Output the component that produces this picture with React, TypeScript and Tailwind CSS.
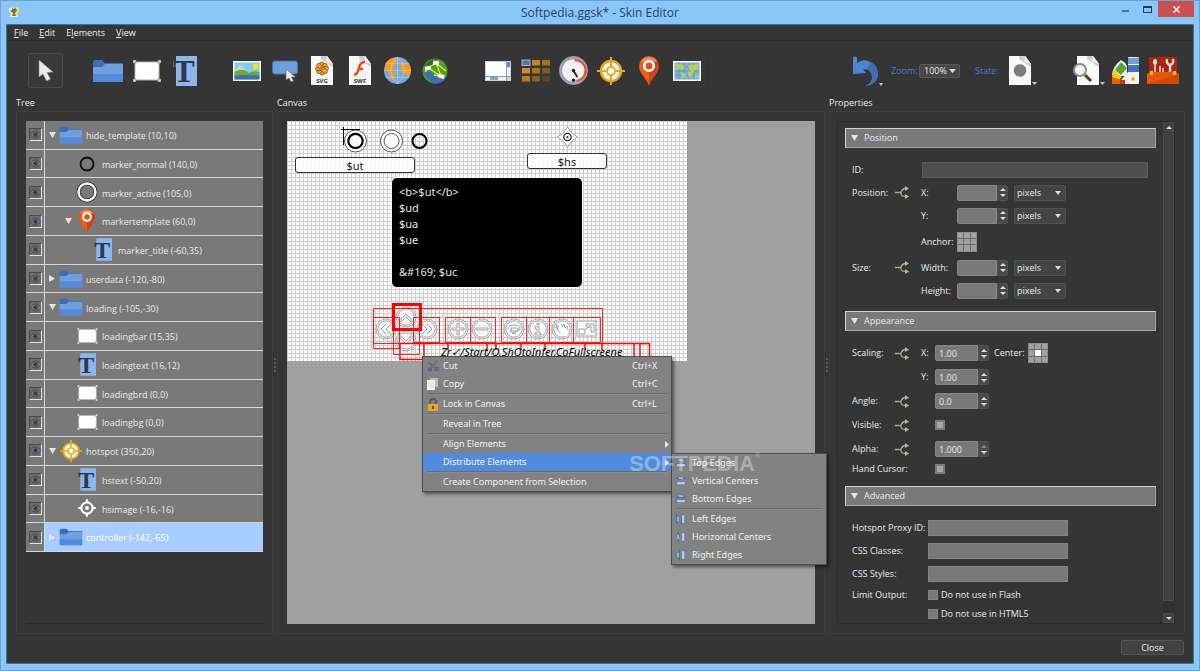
import { useState, type ReactNode } from 'react';

type IconName =
  | 'folder'
  | 'rect'
  | 'text'
  | 'pin'
  | 'hotspot'
  | 'ring'
  | 'ringActive'
  | 'crosshair';

type TreeNode = {
  label: string;
  icon: IconName;
  level: 0 | 1 | 2;
  arrow?: 'open' | 'closed';
};

const treeNodes: TreeNode[] = [
  { label: 'hide_template (10,10)', icon: 'folder', level: 0, arrow: 'open' },
  { label: 'marker_normal (140,0)', icon: 'ring', level: 1 },
  { label: 'marker_active (105,0)', icon: 'ringActive', level: 1 },
  { label: 'markertemplate (60,0)', icon: 'pin', level: 1, arrow: 'open' },
  { label: 'marker_title (-60,35)', icon: 'text', level: 2 },
  { label: 'userdata (-120,-80)', icon: 'folder', level: 0, arrow: 'closed' },
  { label: 'loading (-105,-30)', icon: 'folder', level: 0, arrow: 'open' },
  { label: 'loadingbar (15,35)', icon: 'rect', level: 1 },
  { label: 'loadingtext (16,12)', icon: 'text', level: 1 },
  { label: 'loadingbrd (0,0)', icon: 'rect', level: 1 },
  { label: 'loadingbg (0,0)', icon: 'rect', level: 1 },
  { label: 'hotspot (350,20)', icon: 'hotspot', level: 0, arrow: 'open' },
  { label: 'hstext (-50,20)', icon: 'text', level: 1 },
  { label: 'hsimage (-16,-16)', icon: 'crosshair', level: 1 },
  { label: 'controller (-142,-65)', icon: 'folder', level: 0, arrow: 'closed' },
];

const levelPadding = ['pl-0', 'pl-4', 'pl-8'];

/* ---------- icons ---------- */

function FolderIcon({ className }: { className: string }) {
  return (
    <svg viewBox="0 0 32 24" className={className} preserveAspectRatio="none">
      <path d="M1 3q0-2 2-2h7l3 3h17q1 0 1 1v5H1z" fill="#3f6cb4" />
      <path d="M1 8h9l3-3h18v17q0 1-1 1H2q-1 0-1-1z" fill="#6f9fdf" />
      <path d="M1 15h30v7q0 1-1 1H2q-1 0-1-1z" fill="#528bdb" />
    </svg>
  );
}

function RectIcon({ className }: { className: string }) {
  return (
    <svg viewBox="0 0 28 22" className={className}>
      <rect x="2" y="2" width="24" height="18" fill="#fff" stroke="#b5b5b5" />
      {[
        [0, 0],
        [25, 0],
        [0, 19],
        [25, 19],
      ].map(([x, y]) => (
        <rect key={`${x}-${y}`} x={x} y={y} width="3" height="3" fill="#d8d8d8" stroke="#777" strokeWidth=".5" />
      ))}
    </svg>
  );
}

function TextIcon({ className }: { className: string }) {
  return (
    <svg viewBox="0 0 24 30" className={className}>
      <rect x="3" width="21" height="30" fill="#8fb5ea" />
      <rect y="5" width="3" height="6" fill="#6c6c6c" />
      <text
        x="11"
        y="26"
        textAnchor="middle"
        fontFamily="Liberation Serif, serif"
        fontWeight="bold"
        fontSize="32"
        fill="#2c3a50"
      >
        T
      </text>
    </svg>
  );
}

function PinIcon({ className }: { className: string }) {
  return (
    <svg viewBox="0 0 20 30" className={className}>
      <path d="M10 0a10 10 0 0 0-10 10c0 7 6 10 10 20z" fill="#ee5d12" />
      <path d="M10 0a10 10 0 0 1 10 10c0 7-6 10-10 20z" fill="#c8461a" />
      <path d="M2 5a10 10 0 0 1 16 0q-8 3-16 0z" fill="#f58a62" />
      <circle cx="10" cy="10" r="4.8" fill="#e8501a" stroke="#fff" strokeWidth="2.6" />
    </svg>
  );
}

function HotspotIcon({ className }: { className: string }) {
  return (
    <svg viewBox="0 0 28 28" className={className}>
      <circle cx="14" cy="14" r="10" fill="#fbf6e6" stroke="#e3a722" strokeWidth="2.4" />
      <path d="M14 0v9M14 19v9M0 14h9M19 14h9" stroke="#e3a722" strokeWidth="2" />
      <circle cx="14" cy="14" r="4" fill="#fff" stroke="#e3a722" strokeWidth="1.8" />
    </svg>
  );
}

function CrosshairIcon({ className }: { className: string }) {
  return (
    <svg viewBox="0 0 20 20" className={className}>
      <circle cx="10" cy="10" r="6.2" fill="none" stroke="#fff" strokeWidth="2.2" />
      <circle cx="10" cy="10" r="2.2" fill="#fff" />
      <path d="M8.500 4L10 0l1.500 4zM8.500 16l1.500 4 1.500-4zM4 8.500L0 10l4 1.500zM16 8.500l4 1.500-4 1.500z" fill="#fff" stroke="#fff" />
    </svg>
  );
}

function TreeIcon({ name }: { name: IconName }) {
  switch (name) {
    case 'folder':
      return <FolderIcon className="w-6 h-[18px]" />;
    case 'rect':
      return <RectIcon className="w-[21px] h-4" />;
    case 'text':
      return <TextIcon className="w-[18px] h-[23px]" />;
    case 'pin':
      return <PinIcon className="w-4 h-6" />;
    case 'hotspot':
      return <HotspotIcon className="w-[22px] h-[22px]" />;
    case 'crosshair':
      return <CrosshairIcon className="w-[18px] h-[18px]" />;
    case 'ring':
      return (
        <svg viewBox="0 0 16 16" className="w-4 h-4">
          <circle cx="8" cy="8" r="6.500" fill="none" stroke="#0b0b0b" strokeWidth="1.800" />
        </svg>
      );
    case 'ringActive':
      return (
        <svg viewBox="0 0 22 22" className="w-[22px] h-[22px]">
          <circle cx="11" cy="11" r="8.500" fill="none" stroke="#333" strokeWidth="4" />
          <circle cx="11" cy="11" r="8.500" fill="none" stroke="#fff" strokeWidth="2.400" />
        </svg>
      );
  }
}

function Cursor({ className }: { className: string }) {
  return (
    <svg viewBox="0 0 16 22" className={className}>
      <path d="M1 0v17l4-3 3.500 7 4-2-3.500-6.500 6-.5z" fill="#e9e9e9" stroke="#8a8a8a" strokeWidth=".6" />
    </svg>
  );
}

function ImageIcon() {
  return (
    <svg viewBox="0 0 28 20" className="w-7 h-5">
      <rect width="28" height="20" fill="#fff" />
      <rect x="1.500" y="1.500" width="25" height="17" fill="#7fcdf0" />
      <path d="M2 10l4-6q4 0 7 6z" fill="#cfd3cf" />
      <path d="M1.500 11q9-5 14 1 6-3 11-1v5h-25z" fill="#6eaa35" />
      <path d="M1.500 15q12-2 25 0v3.500h-25z" fill="#3f6ea9" />
      <circle cx="22.500" cy="5.500" r="2.800" fill="#ffe600" />
    </svg>
  );
}

function ButtonIcon() {
  return (
    <svg viewBox="0 0 26 22" className="w-[26px] h-[22px]">
      <rect x=".5" y="1" width="25" height="13" rx="2.500" fill="#6f9fdf" stroke="#4573b5" />
      <path d="M14 9v11l3-2 2 4 2.500-1-2-4h4z" fill="#eee" stroke="#666" strokeWidth=".7" />
    </svg>
  );
}

function PageShape() {
  return (
    <>
      <path d="M1 0h16l6 8v21H1z" fill="#f8f8f8" />
      <path d="M17 0l6 8v3L11 3V0z" fill="#cfcfcf" />
      <path d="M17 0l6 8-7-2z" fill="#eee" />
    </>
  );
}

function FileIcon({ kind }: { kind: 'SVG' | 'SWF' }) {
  return (
    <svg viewBox="0 0 24 29" className="w-6 h-[29px]">
      <PageShape />
      {kind === 'SVG' ? (
        <g stroke="#6b4a12" strokeWidth=".7" fill="#f0a52a">
          {[0, 45, 90, 135].map((angle) => (
            <rect key={angle} x="10" y="6" width="4" height="13" rx="2" transform={`rotate(${angle} 12 12.500)`} />
          ))}
          <circle cx="12" cy="12.500" r="2.200" fill="#c97b14" stroke="none" />
        </g>
      ) : (
        <path d="M17 6q-5 0-6 6-1 6-5 7M9.500 13h5.500" fill="none" stroke="#ea4d0e" strokeWidth="2.400" />
      )}
      <text
        x="12"
        y="27"
        textAnchor="middle"
        fontFamily="Open Sans, sans-serif"
        fontWeight="bold"
        fontSize="6"
        fill="#333"
      >
        {kind}
      </text>
    </svg>
  );
}

function GlobeIcon() {
  return (
    <svg viewBox="0 0 30 30" className="w-[29px] h-[29px]">
      <circle cx="15" cy="15" r="14" fill="#7ba8dc" />
      <path d="M3 7q5-6 10-5l2 4-4 3 2 3-4 2 1 3-3 1-4-3-1-3zM8 15l5 2-1 5-2 4-3-7zM19 6l6 1q4 4 4 9l-3 6-3-4-4-2-1-4z" fill="#f39c24" />
      <path d="M15 1v28M1 15h28M3 8h24M3 22h24M15 1q-14 14 0 28M15 1q14 14 0 28" fill="none" stroke="#d2e1f2" strokeOpacity=".7" strokeWidth=".6" />
    </svg>
  );
}

function NodeGlobeIcon() {
  return (
    <svg viewBox="0 0 26 26" className="w-[26px] h-[26px]">
      <circle cx="13" cy="13" r="12.500" fill="#4ea02c" />
      <path d="M1 9q7-9 14-8l-5 8z" fill="#2f6e24" />
      <path d="M.5 13q7-1 12 4t12 2q-4 7-11 6.500T.5 13z" fill="#3c6fb4" />
      <path d="M6 10l8-5M6 10l13 8M14 5l5 13M14 5l10 8M3 14l3-4M12 17l7 1" stroke="#e8e62a" strokeWidth="1.300" />
      <rect x="3" y="8" width="6" height="4" fill="#fff" transform="rotate(-12 6 10)" />
      <rect x="11" y="3" width="6" height="4" fill="#fff" transform="rotate(8 14 5)" />
      <rect x="16.500" y="16" width="6" height="4" fill="#fff" transform="rotate(18 19 18)" />
    </svg>
  );
}

function ScrollAreaIcon() {
  return (
    <svg viewBox="0 0 26 20" className="w-[26px] h-5">
      <rect width="26" height="20" fill="#c9d3df" />
      <rect x="1" y="1" width="20" height="14" fill="#fff" />
      <rect x="22" y="1" width="3" height="5" fill="#5d8dcc" />
      <rect x="22" y="7" width="3" height="8" fill="#f0f4f8" />
      <rect x="1" y="16" width="20" height="3" fill="#f0f4f8" />
      <rect x="5" y="16" width="8" height="3" fill="#7ba3dc" />
      <path d="M21.500 0v20M0 15.500h26" stroke="#888" strokeWidth=".8" />
    </svg>
  );
}

function ClonerIcon() {
  const fills = ['#4a76b8', '#c58420', '#a87122', '#d08c1f', '#a87122', '#7d5a26', '#b87c22', '#8a6225', '#5b4628'];
  return (
    <svg viewBox="0 0 29 23" className="w-[29px] h-[23px]">
      {fills.map((fill, i) => (
        <rect
          key={i}
          x={1 + (i % 3) * 10}
          y={1 + Math.floor(i / 3) * 8}
          width="8"
          height="5.500"
          fill={fill}
          stroke={i === 0 ? '#c9c9c9' : 'none'}
          strokeWidth=".8"
        />
      ))}
    </svg>
  );
}

function GaugeIcon() {
  return (
    <svg viewBox="0 0 30 30" className="w-[29px] h-[29px]">
      <circle cx="15" cy="15" r="13" fill="#f3f1ef" stroke="#9a9ab2" strokeWidth="2.600" />
      <circle cx="15" cy="15" r="14.500" fill="none" stroke="#c6c6d6" strokeWidth=".8" />
      <path d="M16 4.500a10.500 10.500 0 0 1 2 21" fill="none" stroke="#e0541c" strokeWidth="2" />
      <path d="M15 15l4 7" stroke="#222" strokeWidth="1.800" />
      <circle cx="15" cy="15" r="1.800" fill="#222" />
      <circle cx="15" cy="25" r="1.800" fill="#222" />
    </svg>
  );
}

function MapIcon() {
  return (
    <svg viewBox="0 0 28 20" className="w-7 h-5">
      <rect width="28" height="20" fill="#fff" />
      <rect x="1.500" y="1.500" width="25" height="17" fill="#79aee4" />
      <path d="M6 1.500v17M11 1.500v17M16 1.500v17M21 1.500v17M1.500 6h25M1.500 10h25M1.500 14h25" stroke="#4c78aa" strokeWidth=".4" />
      <path d="M2 3h7l3 3-3 3-3-1-3 2zM8 11l5 2-1 4-3 1zM15 4l10-1 1 5-4 1-2 3-4-3zM15 10l5 2-2 5-3-2zM22 13l4 1v3h-4z" fill="#b3cf5a" />
    </svg>
  );
}

function UndoIcon() {
  return (
    <svg viewBox="0 0 26 30" className="w-[26px] h-[30px]">
      <path d="M0 1q2-1 4 0v6q6-5 13-1 8 5 8 13-1 9-12 11 7-4 6-10-1-7-9-7l3 4L1 18q-1 0-1-1z" fill="#4b86d4" />
      <path d="M18 6q8 5 7 14-2 8-12 10 7-4 6-10-1-6-6-7z" fill="#3f70b4" />
    </svg>
  );
}

function StateIcon() {
  return (
    <svg viewBox="0 0 24 29" className="w-6 h-[29px]">
      <PageShape />
      <circle cx="12" cy="14.500" r="6.300" fill="#7c7c7c" />
    </svg>
  );
}

function PreviewIcon() {
  return (
    <svg viewBox="0 0 28 29" className="w-7 h-[29px]">
      <g transform="translate(4)">
        <PageShape />
      </g>
      <path d="M13 19l6 6" stroke="#5c3d16" strokeWidth="3" />
      <circle cx="8" cy="14" r="6" fill="#f4f4f4" stroke="#8c8c86" strokeWidth="2" />
    </svg>
  );
}

function SwatchesIcon() {
  return (
    <svg viewBox="0 0 28 28" className="w-7 h-7">
      <rect x="17" y="0" width="11" height="27" rx="1" fill="#f4f4f4" />
      <rect x="17" y="1" width="11" height="6" fill="#6f9fdf" />
      <rect x="17" y="8" width="11" height="7" fill="#4272c0" />
      <path d="M10 3q4 2 6 6v10H6L1 18q1-9 9-15z" fill="#eef2e4" />
      <path d="M10 5l6 6-6 7-6-5z" fill="#5aa62d" />
      <path d="M3 13l8 7-4 4-6-4z" fill="#f2d100" />
      <path d="M1 20l9 3v4H1z" fill="#ee5c0c" />
      <path d="M10 23l7-8v12h-7z" fill="#f1e9e4" />
      <path d="M9 23h5v4H9z" fill="#c83a0c" />
      <circle cx="22" cy="22" r="1.800" fill="#e9a620" />
    </svg>
  );
}

function ToolboxIcon() {
  return (
    <svg viewBox="0 0 32 27" className="w-8 h-[27px]">
      <rect x="2" y="0" width="28" height="18" fill="#ad2508" />
      <path d="M8 7v9M13 9v7M16 11v5" stroke="#ddd" strokeWidth="1.600" />
      <ellipse cx="8" cy="5" rx="2" ry="3" fill="#ddd" />
      <path d="M20 2q-1 5 3 6 4-1 3-6M23 8v9" fill="none" stroke="#d8d8d8" strokeWidth="2.400" />
      <path d="M0 17l3-2h26l3 2v10H0z" fill="#ea5407" />
      <path d="M0 27L32 17v10z" fill="#d04a0a" />
      <path d="M3 14h3v4H3zM26 14h3v4h-3z" fill="#f2b51d" />
    </svg>
  );
}

function LinkIcon() {
  return (
    <svg viewBox="0 0 14 13" className="w-[14px] h-[13px]">
      <path d="M0 6.500h6M11 2.500Q7 2.500 6 6.500T11 10.500" fill="none" stroke="#a9a99f" strokeWidth="1.300" />
      <path d="M10 0l4 2.500L10 5zM10 8l4 2.500L10 13z" fill="#b5b5ab" />
    </svg>
  );
}

function Triangle({ direction, className }: { direction: 'down' | 'right' | 'up'; className: string }) {
  const paths = {
    down: 'M0 0h8L4 8z',
    right: 'M0 0l8 4-8 4z',
    up: 'M0 8h8L4 0z',
  };
  return (
    <svg viewBox="0 0 8 8" className={className} fill="currentColor" preserveAspectRatio="none">
      <path d={paths[direction]} />
    </svg>
  );
}

function EyeIcon() {
  return (
    <svg viewBox="0 0 12 10" className="w-[11px] h-[9px]">
      <path d="M0 5q6-8 12 0-6 8-12 0z" fill="#77777c" stroke="#46464b" strokeWidth="1" />
      <circle cx="6" cy="5" r="2.500" fill="#3e3e44" />
    </svg>
  );
}

/* ---------- window chrome ---------- */

function TitleBar() {
  return (
    <header className="h-[23px] shrink-0 grid grid-cols-[1fr_auto_1fr]">
      <div className="pt-[5px] pl-[2px]">
        <svg viewBox="0 0 13 12" className="w-[13px] h-3">
          <path d="M1 2l4-1 2 1 3-1 1 4-2 2 1 4H2l1-4-2-1z" fill="#f3ead6" />
          <path d="M4 1l1 2 3-1 1 3-2 2 1 3H4l1-3-3-2 2-1z" fill="#8a6a35" />
          <path d="M9 3l3-2-2 6-2 3z" fill="#f3dd3a" />
        </svg>
      </div>
      <h1 className="text-[12px] leading-6 text-[#26445e]">Softpedia.ggsk* - Skin Editor</h1>
      <div className="flex justify-end items-start">
        <button aria-label="Minimize" className="w-[22px] h-4 flex justify-center items-center pt-1">
          <span className="w-[7px] h-[2px] bg-[#5b7389]" />
        </button>
        <button aria-label="Maximize" className="w-[22px] h-4 flex justify-center items-center">
          <span className="w-[9px] h-[7px] border border-t-2 border-[#24394c]" />
        </button>
        <button aria-label="Close window" className="w-9 h-4 bg-[#c75050] flex justify-center items-center">
          <svg viewBox="0 0 7 7" className="w-[7px] h-[7px]">
            <path d="M.5.5l6 6M6.500.5l-6 6" stroke="#fff" strokeWidth="1.500" />
          </svg>
        </button>
      </div>
    </header>
  );
}

function MenuBar() {
  return (
    <nav className="h-4 shrink-0 flex gap-[11px] pl-[7px] text-[9px] leading-4 text-[#f0f0f0] border-b border-[#2c2c2c]">
      <button><u>F</u>ile</button>
      <button><u>E</u>dit</button>
      <button>E<u>l</u>ements</button>
      <button><u>V</u>iew</button>
    </nav>
  );
}

function Tool({ label, children }: { label: string; children: ReactNode }) {
  return (
    <button aria-label={label} className="w-[34px] h-[34px] flex items-center justify-center">
      {children}
    </button>
  );
}

function Toolbar() {
  return (
    <div className="h-[54px] shrink-0 flex items-center pt-[5px] pl-[21px] pr-[14px]">
      <button
        aria-label="Select"
        className="w-[35px] h-[35px] flex items-center justify-center rounded-[2px] bg-[#393939] border border-[#4a4a4a]"
      >
        <Cursor className="w-4 h-[22px]" />
      </button>
      <div className="flex justify-between w-[111px] ml-7">
        <Tool label="Container"><FolderIcon className="w-8 h-6" /></Tool>
        <Tool label="Rectangle"><RectIcon className="w-7 h-[22px]" /></Tool>
        <Tool label="Text"><TextIcon className="w-6 h-[30px]" /></Tool>
      </div>
      <div className="flex justify-between w-[222px] ml-7">
        <Tool label="Image"><ImageIcon /></Tool>
        <Tool label="Button"><ButtonIcon /></Tool>
        <Tool label="SVG"><FileIcon kind="SVG" /></Tool>
        <Tool label="SWF"><FileIcon kind="SWF" /></Tool>
        <Tool label="External"><GlobeIcon /></Tool>
        <Tool label="Node marker"><NodeGlobeIcon /></Tool>
      </div>
      <div className="flex justify-between w-[223px] ml-[29px]">
        <Tool label="Scroll area"><ScrollAreaIcon /></Tool>
        <Tool label="Cloner"><ClonerIcon /></Tool>
        <Tool label="Timer"><GaugeIcon /></Tool>
        <Tool label="Hotspot template"><HotspotIcon className="w-7 h-7" /></Tool>
        <Tool label="Marker"><PinIcon className="w-5 h-[30px]" /></Tool>
        <Tool label="Map"><MapIcon /></Tool>
      </div>
      <div className="w-px h-7 ml-1 bg-[#2e2e2e]" />
      <div className="ml-auto flex items-center text-[9px] text-[#4a80c8]">
        <button aria-label="Undo" className="flex items-end">
          <UndoIcon />
          <Triangle direction="down" className="w-1 h-[3px] text-[#ccc]" />
        </button>
        <label htmlFor="zoom" className="ml-2 w-7">Zoom:</label>
        <div className="relative">
          <select
            id="zoom"
            className="appearance-none block w-[41px] h-[14px] pl-1 text-[9px] leading-3 text-[#e8e8e8] bg-[#474747] border border-[#5a5a5a] rounded-[2px]"
          >
            <option>100%</option>
          </select>
          <Triangle direction="down" className="absolute right-1 top-[5px] w-[7px] h-1 text-[#ddd] pointer-events-none" />
        </div>
        <span className="ml-[15px] w-[33px]">State:</span>
        <button aria-label="State" className="flex items-end">
          <StateIcon />
          <Triangle direction="down" className="w-[5px] h-[3px] text-[#ccc]" />
        </button>
        <button aria-label="Preview" className="flex items-end ml-[35px]">
          <PreviewIcon />
          <Triangle direction="down" className="w-[5px] h-[3px] text-[#ccc]" />
        </button>
        <button aria-label="Colors" className="ml-[6px]"><SwatchesIcon /></button>
        <button aria-label="Toolbox" className="ml-2"><ToolboxIcon /></button>
      </div>
    </div>
  );
}

/* ---------- tree ---------- */

function TreeRow({ node, selected, onSelect }: { node: TreeNode; selected: boolean; onSelect: () => void }) {
  return (
    <li className="flex flex-1 min-h-0 bg-[#797979] border-b border-[#d8d8d8]">
      <div className="w-[19px] flex items-center justify-center border-r border-[#d8d8d8]">
        <button
          aria-label={`Toggle ${node.label}`}
          className="w-[13px] h-[13px] flex items-center justify-center bg-[#6c6c6c] border border-t-[#4b4b4b] border-l-[#4b4b4b] border-b-[#e0e0e0] border-r-[#e0e0e0]"
        >
          <EyeIcon />
        </button>
      </div>
      <div
        onClick={onSelect}
        className={`flex flex-1 items-center ${levelPadding[node.level]} ${
          selected ? 'bg-[#aacdff] text-white' : ''
        }`}
      >
        <span className="w-[14px] pl-1 text-[#e6e6de]">
          {node.arrow === 'open' && <Triangle direction="down" className="w-[7px] h-[6px]" />}
          {node.arrow === 'closed' && <Triangle direction="right" className="w-[6px] h-[7px]" />}
        </span>
        <span className="w-6 flex justify-center">
          <TreeIcon name={node.icon} />
        </span>
        <span className="pl-[3px] pt-[2px]">{node.label}</span>
      </div>
    </li>
  );
}

function TreePanel() {
  const [selected, setSelected] = useState(14);
  return (
    <section className="w-[257px] shrink-0 flex flex-col">
      <h2 className="leading-4">Tree</h2>
      <div className="flex-1 border border-[#3f3f3f] rounded-[2px] p-[9px]">
        <div className="h-full border-b border-[#2b2b2b]">
          <ul className="h-[431px] flex flex-col">
            {treeNodes.map((node, i) => (
              <TreeRow key={node.label} node={node} selected={i === selected} onSelect={() => setSelected(i)} />
            ))}
          </ul>
        </div>
      </div>
    </section>
  );
}

/* ---------- canvas ---------- */

function Distribute({ vertical, offset }: { vertical?: boolean; offset: number }) {
  return (
    <svg viewBox="0 0 12 12" className="w-[10px] h-[10px]">
      <g transform={vertical ? 'rotate(-90 6 6)' : undefined}>
        <path d={`M0 ${2 + offset}h12M0 ${8 + offset}h12`} stroke="#2f5f9f" strokeWidth="1" />
        <rect x="3" y="1" width="6" height="3" fill="#8fb5dd" stroke="#3c6aa8" strokeWidth=".5" />
        <rect x="1" y="7" width="10" height="3.500" fill="#b5cde6" stroke="#3c6aa8" strokeWidth=".5" />
      </g>
    </svg>
  );
}

function CutIcon() {
  return (
    <svg viewBox="0 0 12 12" className="w-3 h-3" fill="none">
      <path d="M1 2l7 6M10 1L4 8" stroke="#6a6a7a" strokeWidth="1.500" />
      <circle cx="3" cy="9.500" r="1.500" stroke="#55557c" strokeWidth="1.200" />
      <circle cx="9.500" cy="9" r="1.500" stroke="#55557c" strokeWidth="1.200" />
    </svg>
  );
}

function CopyIcon() {
  return (
    <svg viewBox="0 0 12 12" className="w-3 h-3">
      <path d="M3 0h8v9H3z" fill="#bdbdb8" />
      <path d="M0 2h8v10H0z" fill="#f1f1ee" />
      <path d="M2 5h5M2 7h5M2 9h5" stroke="#dcdcd8" />
    </svg>
  );
}

function LockIcon() {
  return (
    <svg viewBox="0 0 12 13" className="w-3 h-[13px]">
      <path d="M3 7V4q0-3 3-3t3 3v3" fill="none" stroke="#53565c" strokeWidth="1.800" />
      <rect x="1" y="6" width="10" height="7" fill="#e4a91f" />
      <rect x="5" y="8" width="2" height="3" fill="#6e4c08" />
    </svg>
  );
}

type MenuItemProps = {
  label: string;
  icon?: ReactNode;
  shortcut?: string;
  submenu?: boolean;
  active?: boolean;
};

function MenuItem({ label, icon, shortcut, submenu, active }: MenuItemProps) {
  return (
    <button
      role="menuitem"
      className={`w-full h-[18px] flex items-center pl-1 pr-[2px] text-left ${active ? 'bg-[#528bdb]' : ''}`}
    >
      <span className="w-4 h-[13px] flex items-center">{icon}</span>
      <span className="flex-1">{label}</span>
      {shortcut && <span className="w-[37px]">{shortcut}</span>}
      {submenu && <Triangle direction="right" className="w-1 h-[7px] text-[#e2e2e2]" />}
    </button>
  );
}

function MenuSeparator() {
  return <div className="h-[2px] mx-1 border-t border-[#6b6b6b] bg-[#8b8b8b]" />;
}

const menuClass = 'absolute bg-[#828282] border border-[#4c4c4c] shadow-[2px_2px_3px_rgba(0,0,0,0.5)] text-[#f2f2f2]';

function ContextMenu() {
  return (
    <div role="menu" className={`${menuClass} left-[135px] top-[235px] w-[250px] font-['Noto_Sans',sans-serif]`}>
      <MenuItem label="Cut" icon={<CutIcon />} shortcut="Ctrl+X" />
      <MenuItem label="Copy" icon={<CopyIcon />} shortcut="Ctrl+C" />
      <MenuSeparator />
      <MenuItem label="Lock in Canvas" icon={<LockIcon />} shortcut="Ctrl+L" />
      <MenuSeparator />
      <MenuItem label="Reveal in Tree" />
      <MenuSeparator />
      <MenuItem label="Align Elements" submenu />
      <MenuItem label="Distribute Elements" submenu active />
      <MenuSeparator />
      <MenuItem label="Create Component from Selection" />
      <div role="menu" className={`${menuClass} left-[248px] top-24 w-[156px]`}>
        <MenuItem label="Top Edges" icon={<Distribute offset={-1} />} />
        <MenuItem label="Vertical Centers" icon={<Distribute offset={1} />} />
        <MenuItem label="Bottom Edges" icon={<Distribute offset={2} />} />
        <MenuSeparator />
        <MenuItem label="Left Edges" icon={<Distribute vertical offset={-1} />} />
        <MenuItem label="Horizontal Centers" icon={<Distribute vertical offset={1} />} />
        <MenuItem label="Right Edges" icon={<Distribute vertical offset={2} />} />
      </div>
    </div>
  );
}

// round controller buttons: centre and glyph path drawn around it
const controllerButtons = [
  { x: 99, y: 208, glyph: 'M0-5l-5 5 5 5M5-5l-5 5 5 5' },
  { x: 119, y: 196, glyph: 'M-5 2l5-5 5 5v3l-5-5-5 5z' },
  { x: 119, y: 220, glyph: 'M-5-2l5 5 5-5v-3l-5 5-5-5z' },
  { x: 140, y: 208, glyph: 'M0-5l5 5-5 5M-5-5l5 5-5 5' },
  { x: 171, y: 208, glyph: 'M-6-1h5v-5h2v5h5v2h-5v5h-2v-5h-5z' },
  { x: 195, y: 208, glyph: 'M-6-1h12v2h-12z' },
  { x: 227, y: 208, glyph: 'M-6 0q0-4 6-4t6 3-5 4l-3 2M-4 2l6 3M-3-1h7v3h-7z' },
  { x: 251, y: 208, glyph: 'M-3-2h4v6h2v2h-6v-2h2v-4h-2zM-1-6h2v2h-2z' },
  { x: 275, y: 208, glyph: 'M-6-2l3 5 3 3h4l2-5-1-4-2 2-1-4-2 3-2-4-1 4-3-2 2 4z' },
];

function SheetDrawing() {
  return (
    <svg viewBox="0 0 400 240" className="absolute inset-0 w-[400px] h-60" fill="none">
      <circle cx="68.500" cy="20" r="11" fill="#fff" stroke="#555" />
      <circle cx="68.500" cy="20" r="7.200" stroke="#000" strokeWidth="2.200" />
      <path d="M54 8.500h19M56.500 6v18" stroke="#000" />
      <circle cx="104.500" cy="20" r="11" fill="#fff" stroke="#555" />
      <circle cx="104.500" cy="20" r="7.500" stroke="#555" />
      <circle cx="132.500" cy="20" r="7" stroke="#000" strokeWidth="2" />
      <path d="M280.500 5.500l3 5 2 2 5 3.500-5 3.500-2 2-3 5-3-5-2-2-5-3.500 5-3.500 2-2z" fill="#fff" stroke="#999" />
      <circle cx="280.500" cy="16" r="3.700" stroke="#222" strokeWidth="1.300" />
      <circle cx="280.500" cy="16" r="1" fill="#222" />

      {controllerButtons.map((b) => (
        <g key={`${b.x}-${b.y}`} transform={`translate(${b.x} ${b.y})`} stroke="#9a9a9a" strokeWidth=".9">
          <circle r="10" fill="#fff" fillOpacity=".7" />
          <circle r="8.200" />
          <path d={b.glyph} />
        </g>
      ))}
      <path d="M272 210v-7q1-2 2 0l1 4 5 1q2 3 0 7h-5z" fill="#fff" />
      <g stroke="#9a9a9a" strokeWidth=".9">
        <rect x="290" y="200" width="19" height="15" fill="#fff" fillOpacity=".7" />
        <rect x="292" y="208" width="6" height="5" />
        <path d="M299 203h8v8h-3v-5h-5zM299 208l5-4" />
      </g>

      <g stroke="#f00">
        <path
          d="M86.500 187.500h229v35h-229zM86.500 196.500h26v31h-26zM126.500 196.500h26v25h-26zM106.500 209.500h26v24h-26z"
          strokeOpacity=".85"
        />
        <path
          d="M158.500 196.500h50v25h-50zM183.500 196.500v25M214.500 196.500h99v25h-99zM239.500 196.500v25M262.500 196.500v25M286.500 196.500v25"
          strokeOpacity=".85"
        />
        <rect x="106.500" y="183.500" width="27" height="25" strokeWidth="3" />
        <path d="M113 222.500h249.500v16h-249.500zM137 223v16M353 223v16M347 223v16" strokeWidth="1.400" />
        <path d="M161 223v6M200 223v7M209 223v6M234 223v6M258 223v6M298 223v6M315 223v6" strokeWidth="1.400" />
      </g>
    </svg>
  );
}

function CanvasPanel() {
  return (
    <section className="flex-1 min-w-0 flex flex-col">
      <h2 className="leading-4">Canvas</h2>
      <div className="flex-1 border border-[#3f3f3f] rounded-[2px] p-[9px]">
        <div className="relative h-full bg-[#a0a0a0]">
          <div className="relative w-[400px] h-60 overflow-hidden bg-white bg-[linear-gradient(#cdcdcd_1px,transparent_1px),linear-gradient(90deg,#cdcdcd_1px,transparent_1px)] bg-[size:4px_4px] text-[11px] text-[#222] font-['Noto_Sans',sans-serif]">
            <SheetDrawing />
            <p className="absolute left-2 top-9 w-[120px] h-4 leading-4 text-center bg-white/80 border border-[#333] rounded-[3px]">
              $ut
            </p>
            <p className="absolute left-60 top-8 w-20 h-4 leading-4 text-center bg-white/80 border border-[#333] rounded-[3px]">
              $hs
            </p>
            <div className="absolute left-[104px] top-14 w-[192px] h-[111px] pl-[7px] pt-[6px] leading-4 whitespace-pre text-[#e4e4e4] bg-black border border-white rounded-[6px]">
              {'<b>$ut</b>\n$ud\n$ua\n$ue\n\n&#169; $uc'}
            </div>
            <p className="absolute left-[154px] top-[223px] leading-4 italic whitespace-nowrap text-black">
              Zr✓/Start/O.ShOtoInfer.CoFullscreene
            </p>
          </div>
          <ContextMenu />
          <p className="absolute left-[342px] top-[329px] flex items-start font-['Liberation_Sans',sans-serif] font-bold text-[22px] leading-7 text-white/35 pointer-events-none">
            SOFTPEDIA<sup className="top-0 text-[7px] leading-3 font-normal">®</sup>
          </p>
        </div>
      </div>
    </section>
  );
}

/* ---------- properties ---------- */

function Section({ title, children }: { title: string; children: ReactNode }) {
  const [open, setOpen] = useState(true);
  return (
    <div>
      <button
        onClick={() => setOpen(!open)}
        className="w-full h-5 flex items-center gap-[6px] pl-[5px] bg-[#797979] border border-[#a6a6a6] border-t-[#d0d0d0] border-l-[#d0d0d0]"
      >
        <Triangle direction="down" className="w-[7px] h-[6px] text-[#e6e6de]" />
        {title}
      </button>
      {open && <div className="pt-[10px] pb-[9px] pl-[7px]">{children}</div>}
    </div>
  );
}

type RowProps = {
  label?: string;
  link?: boolean;
  height?: string;
  children?: ReactNode;
};

function Row({ label, link, height = 'h-6', children }: RowProps) {
  return (
    <div className={`flex items-center ${height}`}>
      <span className="w-[43px] whitespace-nowrap">{label}</span>
      <span className="w-[26px]">{link && <LinkIcon />}</span>
      {children}
    </div>
  );
}

function SpinBox({ id, value = '', width, maxed }: { id: string; value?: string; width: string; maxed?: boolean }) {
  return (
    <div className="flex h-4">
      <input
        id={id}
        defaultValue={value}
        className={`${width} h-4 pl-[3px] bg-[#797979] border border-[#858585] rounded-l-[2px]`}
      />
      <div className="w-[11px] flex flex-col justify-center items-center gap-[3px] bg-[#484848] border border-[#505050] rounded-r-[2px]">
        <button aria-label="Increase" className={maxed ? 'text-[#888]' : 'text-[#ddd]'}>
          <Triangle direction="up" className="w-[6px] h-[3px]" />
        </button>
        <button aria-label="Decrease" className="text-[#ddd]">
          <Triangle direction="down" className="w-[6px] h-[3px]" />
        </button>
      </div>
    </div>
  );
}

function UnitSelect({ label }: { label: string }) {
  return (
    <div className="relative ml-[6px]">
      <select
        aria-label={label}
        className="appearance-none block w-[52px] h-4 pl-[2px] bg-[#444] border border-[#525252] rounded-[2px]"
      >
        <option>pixels</option>
        <option>%</option>
      </select>
      <Triangle direction="down" className="absolute right-[5px] top-[6px] w-[6px] h-1 text-[#ddd] pointer-events-none" />
    </div>
  );
}

function AnchorGrid({ label, active }: { label: string; active?: number }) {
  return (
    <div role="group" aria-label={label} className="grid grid-cols-3 gap-px w-5 h-5 bg-[#6a6a6a] border border-[#8c8c8c]">
      {Array.from({ length: 9 }, (_, i) => (
        <button
          key={i}
          aria-label={`${label} ${i + 1}`}
          className={i === active ? 'bg-white' : 'bg-[#a0a0a0]'}
        />
      ))}
    </div>
  );
}

function TriStateBox({ id }: { id: string }) {
  return (
    <input
      id={id}
      type="checkbox"
      className="appearance-none w-[10px] h-[10px] bg-[#a6a6a6] border-2 border-[#7c7c7c]"
    />
  );
}

function PositionSection() {
  return (
    <Section title="Position">
      <div className="flex items-center h-[23px]">
        <label htmlFor="element-id" className="w-[70px]">ID:</label>
        <input id="element-id" className="w-[226px] h-4 px-1 bg-[#505050] border border-[#5a5a5a]" />
      </div>
      <Row label="Position:" link height="h-[23px]">
        <label htmlFor="pos-x" className="w-9">X:</label>
        <SpinBox id="pos-x" width="w-10" />
        <UnitSelect label="X unit" />
      </Row>
      <Row height="h-[23px]">
        <label htmlFor="pos-y" className="w-9">Y:</label>
        <SpinBox id="pos-y" width="w-10" />
        <UnitSelect label="Y unit" />
      </Row>
      <Row height="h-[29px]">
        <span className="w-9">Anchor:</span>
        <AnchorGrid label="Anchor" />
      </Row>
      <Row label="Size:" link height="h-[23px]">
        <label htmlFor="size-w" className="w-9">Width:</label>
        <SpinBox id="size-w" width="w-10" />
        <UnitSelect label="Width unit" />
      </Row>
      <Row height="h-[23px]">
        <label htmlFor="size-h" className="w-9">Height:</label>
        <SpinBox id="size-h" width="w-10" />
        <UnitSelect label="Height unit" />
      </Row>
    </Section>
  );
}

function AppearanceSection() {
  return (
    <Section title="Appearance">
      <Row label="Scaling:" link>
        <label htmlFor="scale-x" className="w-[14px]">X:</label>
        <SpinBox id="scale-x" value="1.00" width="w-[43px]" />
        <span className="w-[34px] ml-[5px]">Center:</span>
        <AnchorGrid label="Center" active={4} />
      </Row>
      <Row>
        <label htmlFor="scale-y" className="w-[14px]">Y:</label>
        <SpinBox id="scale-y" value="1.00" width="w-[43px]" />
      </Row>
      <Row label="Angle:" link>
        <label htmlFor="angle" aria-label="Angle" className="w-[14px]" />
        <SpinBox id="angle" value="0.0" width="w-[43px]" />
      </Row>
      <Row label="Visible:" link>
        <label htmlFor="visible" aria-label="Visible" className="w-[14px]" />
        <TriStateBox id="visible" />
      </Row>
      <Row label="Alpha:" link>
        <label htmlFor="alpha" aria-label="Alpha" className="w-[14px]" />
        <SpinBox id="alpha" value="1.000" width="w-[43px]" maxed />
      </Row>
      <Row label="Hand Cursor:" height="h-4">
        <label htmlFor="hand-cursor" aria-label="Hand Cursor" className="w-[14px]" />
        <TriStateBox id="hand-cursor" />
      </Row>
    </Section>
  );
}

const advancedFields = [
  { id: 'proxy-id', label: 'Hotspot Proxy ID:' },
  { id: 'css-classes', label: 'CSS Classes:' },
  { id: 'css-styles', label: 'CSS Styles:' },
];

function AdvancedSection() {
  return (
    <Section title="Advanced">
      {advancedFields.map((field) => (
        <div key={field.id} className="flex items-center h-[23px]">
          <label htmlFor={field.id} className="w-[76px] whitespace-nowrap">{field.label}</label>
          <input id={field.id} className="w-[140px] h-4 px-1 bg-[#797979] border border-[#838383]" />
        </div>
      ))}
      {['Flash', 'HTML5'].map((target, i) => (
        <div key={target} className="flex items-center h-[19px]">
          <span className="w-[76px]">{i === 0 && 'Limit Output:'}</span>
          <label className="flex items-center gap-[3px]">
            <input type="checkbox" className="appearance-none w-[10px] h-[10px] bg-[#797979] border border-[#838383]" />
            Do not use in {target}
          </label>
        </div>
      ))}
    </Section>
  );
}

function PropertiesPanel() {
  return (
    <section className="w-[356px] shrink-0 flex flex-col min-h-0">
      <h2 className="leading-4">Properties</h2>
      <div className="flex-1 min-h-0 border border-[#3f3f3f] rounded-[2px] pl-[7px] pr-[9px] py-[9px]">
        <div className="h-full flex border border-[#2d2d2d]">
          <div className="flex-1 min-w-0 overflow-hidden pl-[7px] pr-[7px] pt-[6px]">
            <PositionSection />
            <AppearanceSection />
            <AdvancedSection />
          </div>
          <div className="w-[11px] flex flex-col bg-[#303030]">
            <button aria-label="Scroll up" className="h-[10px] flex items-center justify-center bg-[#424242] border border-[#4c4c4c] text-[#ddd]">
              <Triangle direction="up" className="w-[6px] h-[3px]" />
            </button>
            <div className="flex-1 mt-px mb-3 bg-[#404040] border border-[#4c4c4c]" />
            <button aria-label="Scroll down" className="h-[10px] flex items-center justify-center bg-[#424242] border border-[#4c4c4c] text-[#ddd]">
              <Triangle direction="down" className="w-[6px] h-[3px]" />
            </button>
          </div>
        </div>
      </div>
    </section>
  );
}

function Splitter() {
  return (
    <div className="w-1 shrink-0 flex items-center justify-center">
      <span className="h-[14px] border-l-2 border-dotted border-[#5c5c5c]" />
    </div>
  );
}

export default function App() {
  return (
    <div className="h-screen min-h-[560px] flex flex-col px-[5px] pb-[6px] bg-[#8bc6fa] border border-[#6fa3cf] font-['Open_Sans',sans-serif]">
      <TitleBar />
      <div className="flex-1 min-h-0 flex flex-col bg-[#353535] text-[#ebebeb] text-[9px] border border-[#46708f]">
        <MenuBar />
        <Toolbar />
        <main className="flex-1 min-h-0 flex pl-[9px] pr-2">
          <TreePanel />
          <Splitter />
          <CanvasPanel />
          <Splitter />
          <PropertiesPanel />
        </main>
        <footer className="h-[29px] shrink-0 flex justify-end items-start pt-[6px] pr-[9px]">
          <button className="w-[63px] h-[15px] bg-[#424242] border border-[#555] rounded-[2px] leading-3">Close</button>
        </footer>
      </div>
    </div>
  );
}
